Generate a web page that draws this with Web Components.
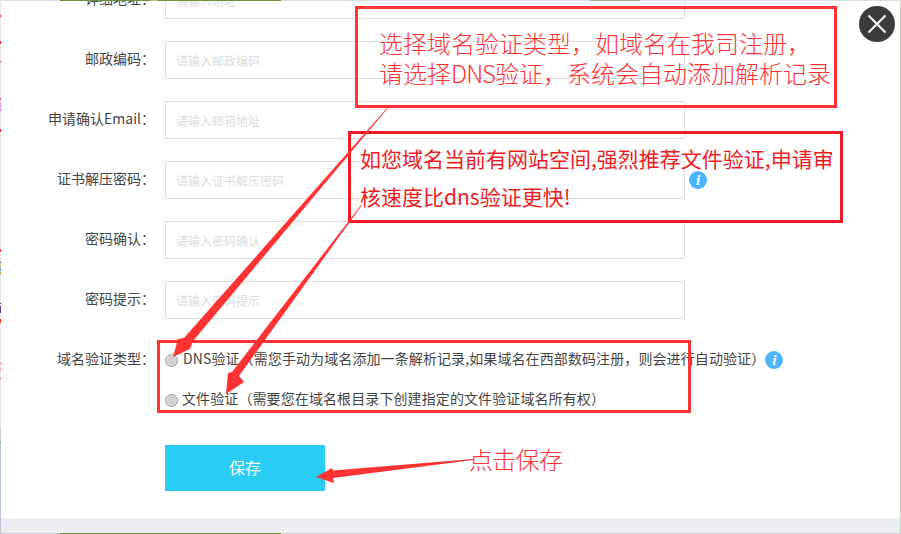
<!DOCTYPE html>
<html lang="zh">
<head>
<meta charset="utf-8">
<title>域名验证</title>
<style>
  html, body { margin: 0; padding: 0; overflow: hidden; }
  body { font-family: "Noto Sans CJK SC", "Liberation Sans", sans-serif; }
  .dns { letter-spacing: -1px; }
</style>
</head>
<body>
<verify-dialog>
  <form-row label="详细地址：" placeholder="请输入地址"></form-row>
  <form-row label="邮政编码：" placeholder="请输入邮政编码"></form-row>
  <form-row label="申请确认Email：" placeholder="请输入邮箱地址"></form-row>
  <form-row label="证书解压密码：" placeholder="请输入证书解压密码"><info-icon></info-icon></form-row>
  <form-row label="密码确认：" placeholder="请输入密码确认"></form-row>
  <form-row label="密码提示：" placeholder="请输入密码提示"></form-row>
  <radio-group label="域名验证类型：">
    <radio-option>DNS验证（需您手动为域名添加一条解析记录,如果域名在西部数码注册，则会进行自动验证）<info-icon></info-icon></radio-option>
    <radio-option class="file">文件验证（需要您在域名根目录下创建指定的文件验证域名所有权）</radio-option>
  </radio-group>
  <save-button>保存</save-button>

  <note-box slot="over" style="left:355px;top:6px;width:482px;height:102px;padding:19px 0 0 21px;font-size:24px;line-height:30px;color:#f33;font-weight:300;border-color:#f33">选择域名验证类型，如域名在我司注册，<br>请选择<span class="dns">DNS</span>验证，系统会自动添加解析记录</note-box>
  <note-box slot="over" style="left:348px;top:131px;width:495px;height:92px;padding:5px 0 0 9px;font-size:21px;line-height:38px;color:#ed1c24;border-color:#ed1c24">如您域名当前有网站空间,强烈推荐文件验证,申请审<br>核速度比dns验证更快!</note-box>
  <note-box slot="over" style="left:157px;top:340px;width:534px;height:73px;border-color:#f33"></note-box>
  <note-box slot="over" style="left:469px;top:441px;border:0;font-size:24px;line-height:36px;letter-spacing:-0.7px;color:#f33;font-weight:300">点击保存</note-box>
  <arrow-layer slot="over"></arrow-layer>
  <close-button slot="over"></close-button>
</verify-dialog>

<script>
// one pixel thick strips of the page behind the modal
function bands(dir, base, list) {
  const stops = [];
  let pos = 0;
  list.forEach(([from, to, color]) => {
    stops.push(`${base} ${pos}px`, `${base} ${from}px`, `${color} ${from}px`, `${color} ${to}px`);
    pos = to;
  });
  stops.push(`${base} ${pos}px`, `${base} 100%`);
  return `linear-gradient(${dir}, ${stops.join(",")})`;
}

const leftEdge = bands("to bottom", "#e6e6e6", [
  [15, 17, "#f33"], [41, 44, "#ed1c24"], [61, 62, "#ed1c24"], [98, 100, "#f0508c"],
  [102, 108, "#e6a0e6"], [109, 111, "#f0508c"], [129, 132, "#ed1c24"], [249, 252, "#f33"],
  [262, 263, "#6b4a2a"], [265, 267, "#e0a040"], [268, 271, "#4da3e6"], [272, 274, "#c89040"],
  [303, 304, "#2a3a6a"], [306, 313, "#6a3a90"], [319, 323, "#f33"], [363, 364, "#f33"],
  [369, 370, "#f33"], [378, 379, "#f33"], [427, 442, "#d4d4d4"], [442, 443, "#2a8ae0"],
  [443, 447, "#bbbbbb"], [447, 534, "#b9c6d9"]
]);
const topEdge = bands("to right", "#dcdcdc", [
  [60, 150, "#6f8f3a"], [150, 158, "#b8b8a0"], [158, 281, "#6f8f3a"], [590, 640, "#a8a898"]
]);
const bottomEdge = bands("to right", "#c3ccd8", [
  [60, 281, "#6f8f3a"], [281, 901, "#d0d0d0"]
]);

class VerifyDialog extends HTMLElement {
  constructor() {
    super();
    this.attachShadow({ mode: "open" });
  }

  static get styles() {
    return /* css */`
      :host {
        display: block;
        position: relative;
        width: 901px;
        height: 534px;
        overflow: hidden;
        box-sizing: border-box;
        padding: 1px;
        background:
          ${leftEdge} left top / 1px 100% no-repeat,
          ${topEdge} left top / 100% 1px no-repeat,
          ${bottomEdge} left bottom / 100% 1px no-repeat,
          linear-gradient(#c5d2bf, #c5d2bf) right top / 1px 100% no-repeat,
          #fff;
        font-family: "Noto Sans CJK SC", "Liberation Sans", sans-serif;
      }
      .panel {
        display: flex;
        flex-direction: column;
        height: 100%;
      }
      .body {
        flex: 1;
        min-height: 0;
        overflow: hidden;
        background: #fff;
      }
      .rows {
        display: flex;
        flex-direction: column;
        margin-top: -20px;
        margin-left: -1px;
      }
      .strip {
        height: 15px;
        background: #ebeef3;
      }
    `;
  }

  connectedCallback() {
    this.shadowRoot.innerHTML = /* html */`
    <style>${VerifyDialog.styles}</style>
    <div class="panel">
      <div class="body"><div class="rows"><slot></slot></div></div>
      <div class="strip"></div>
    </div>
    <slot name="over"></slot>`;
  }
}

class FormRow extends HTMLElement {
  constructor() {
    super();
    this.attachShadow({ mode: "open" });
  }

  static get styles() {
    return /* css */`
      :host {
        display: flex;
        align-items: center;
        gap: 10px;
        height: 38px;
        margin-bottom: 22px;
      }
      .label {
        width: 155px;
        padding-bottom: 5px;
        text-align: right;
        font-size: 14px;
        color: #444;
        white-space: nowrap;
      }
      .input {
        box-sizing: border-box;
        width: 520px;
        height: 38px;
        border: 1px solid #ddd;
        padding: 2px 10px 0;
        font: 12px/34px "Noto Sans CJK SC", sans-serif;
        color: #ddd;
      }
      ::slotted(info-icon) { margin-left: -6px; }
    `;
  }

  connectedCallback() {
    this.shadowRoot.innerHTML = /* html */`
    <style>${FormRow.styles}</style>
    <div class="label">${this.getAttribute("label")}</div>
    <div class="input">${this.getAttribute("placeholder")}</div>
    <slot></slot>`;
  }
}

class RadioGroup extends HTMLElement {
  constructor() {
    super();
    this.attachShadow({ mode: "open" });
  }

  static get styles() {
    return /* css */`
      :host {
        display: flex;
        gap: 10px;
        align-items: flex-start;
      }
      .label {
        width: 155px;
        height: 38px;
        line-height: 35px;
        text-align: right;
        font-size: 14px;
        color: #444;
        white-space: nowrap;
      }
      .options {
        display: flex;
        flex-direction: column;
        gap: 2px;
      }
    `;
  }

  connectedCallback() {
    this.shadowRoot.innerHTML = /* html */`
    <style>${RadioGroup.styles}</style>
    <div class="label">${this.getAttribute("label")}</div>
    <div class="options"><slot></slot></div>`;
  }
}

class RadioOption extends HTMLElement {
  constructor() {
    super();
    this.attachShadow({ mode: "open" });
  }

  static get styles() {
    return /* css */`
      :host {
        display: flex;
        align-items: center;
        box-sizing: border-box;
        height: 38px;
        padding-bottom: 4px;
        font-size: 14px;
        letter-spacing: 0.1px;
        color: #444;
        white-space: nowrap;
      }
      :host(.file) input { margin-right: 4px; }
      input {
        appearance: none;
        box-sizing: border-box;
        width: 13px;
        height: 13px;
        margin: 5px 5px 0 0;
        flex: none;
        border-radius: 50%;
        border: 1px solid #9a9a9a;
        background: radial-gradient(circle at 50% 50%, #cfcfcf 0 40%, #dedede 70%, #f4f4f4 100%);
      }
      ::slotted(info-icon) { margin-top: 4px; }
    `;
  }

  connectedCallback() {
    this.shadowRoot.innerHTML = /* html */`
    <style>${RadioOption.styles}</style>
    <input type="radio" tabindex="-1">
    <slot></slot>`;
  }
}

class InfoIcon extends HTMLElement {
  constructor() {
    super();
    this.attachShadow({ mode: "open" });
  }

  static get styles() {
    return /* css */`
      :host {
        display: inline-flex;
        justify-content: center;
        align-items: center;
        width: 18px;
        height: 18px;
        flex: none;
        border-radius: 50%;
        background: #4db5ff;
        color: #fff;
        letter-spacing: 0;
        font: italic bold 15px/18px "Liberation Serif", serif;
      }
    `;
  }

  connectedCallback() {
    this.shadowRoot.innerHTML = /* html */`<style>${InfoIcon.styles}</style>i`;
  }
}

class SaveButton extends HTMLElement {
  constructor() {
    super();
    this.attachShadow({ mode: "open" });
  }

  static get styles() {
    return /* css */`
      :host {
        display: flex;
        justify-content: center;
        align-items: center;
        box-sizing: border-box;
        width: 160px;
        height: 46px;
        margin: 26px 0 0 165px;
        padding-bottom: 2px;
        background: #29ccf3;
        color: #fff;
        font-size: 16px;
      }
    `;
  }

  connectedCallback() {
    this.shadowRoot.innerHTML = /* html */`<style>${SaveButton.styles}</style><slot></slot>`;
  }
}

class NoteBox extends HTMLElement {
  constructor() {
    super();
    this.attachShadow({ mode: "open" });
  }

  connectedCallback() {
    this.shadowRoot.innerHTML = /* html */`
    <style>
      :host {
        position: absolute;
        box-sizing: border-box;
        border: 3px solid #f33;
        white-space: nowrap;
      }
    </style>
    <slot></slot>`;
  }
}

class ArrowLayer extends HTMLElement {
  constructor() {
    super();
    this.attachShadow({ mode: "open" });
  }

  connectedCallback() {
    this.shadowRoot.innerHTML = /* html */`
    <style>
      :host { position: absolute; left: 0; top: 0; width: 901px; height: 534px; pointer-events: none; }
      svg { display: block; }
    </style>
    <svg width="901" height="534" viewBox="0 0 901 534">
      <g fill="#f33">
        <polygon points="388,108 387.5,107.5 184,338 178,339 173,357 190,349 193,341"/>
        <polygon points="362,205 361.5,204.5 232,372 228,373 226,394 244,382 239,376"/>
        <polygon points="473,459 473,460 333,478 334,483 316,477 332,468 333,470.5"/>
      </g>
    </svg>`;
  }
}

class CloseButton extends HTMLElement {
  constructor() {
    super();
    this.attachShadow({ mode: "open" });
  }

  connectedCallback() {
    this.shadowRoot.innerHTML = /* html */`
    <style>
      :host {
        position: absolute;
        left: 859px;
        top: 6px;
        width: 36px;
        height: 36px;
        border-radius: 50%;
        background: #3b3b3b;
      }
      svg { display: block; }
    </style>
    <svg width="36" height="36" viewBox="0 0 36 36">
      <path d="M9.5 9.5 L26.5 26.5 M26.5 9.5 L9.5 26.5" stroke="#fff" stroke-width="2" fill="none"/>
    </svg>`;
  }
}

customElements.define("verify-dialog", VerifyDialog);
customElements.define("form-row", FormRow);
customElements.define("radio-group", RadioGroup);
customElements.define("radio-option", RadioOption);
customElements.define("info-icon", InfoIcon);
customElements.define("save-button", SaveButton);
customElements.define("note-box", NoteBox);
customElements.define("arrow-layer", ArrowLayer);
customElements.define("close-button", CloseButton);
</script>
</body>
</html>
